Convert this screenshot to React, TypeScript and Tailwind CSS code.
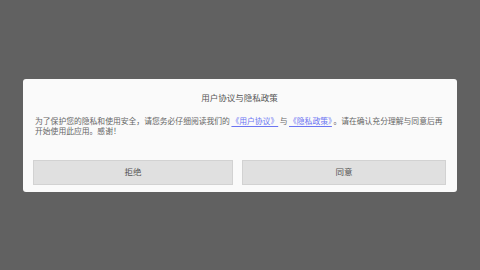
export default function App() {
  return (
    <div
      className="w-[480px] h-[270px] bg-[#616161] flex items-center justify-center"
      style={{ fontFamily: "'Liberation Sans', 'Noto Sans CJK SC', sans-serif" }}
    >
      <div className="w-[434px] h-[113px] bg-[#fafafa] rounded-[3px] flex flex-col pl-[10px] pr-[11px] pb-[6px]">
        <div className="pt-[13px] h-[25px] text-center text-[8.5px] leading-[12px] text-[#555]">
          用户协议与隐私政策
        </div>
        <p className="mt-[13px] px-[2px] text-[7.8px] leading-[10px] text-[#666] whitespace-nowrap">
          为了保护您的隐私和使用安全，请您务必仔细阅读我们的
          <span className="mx-[1.5px] text-[#6b74f2] underline underline-offset-2">《用户协议》</span>与
          <span className="mx-[1.5px] text-[#6b74f2] underline underline-offset-2">《隐私政策》</span>。请在确认充分理解与同意后再
          <br />
          开始使用此应用。感谢！
        </p>
        <div className="mt-auto mb-[1px] flex gap-[9px]">
          <button className="w-[200px] h-[25px] bg-[#e0e0e0] border border-[#d2d2d2] text-[8.5px] text-[#555]">
            拒绝
          </button>
          <button className="flex-1 h-[25px] bg-[#e0e0e0] border border-[#d2d2d2] text-[8.5px] text-[#555]">
            同意
          </button>
        </div>
      </div>
    </div>
  );
}
